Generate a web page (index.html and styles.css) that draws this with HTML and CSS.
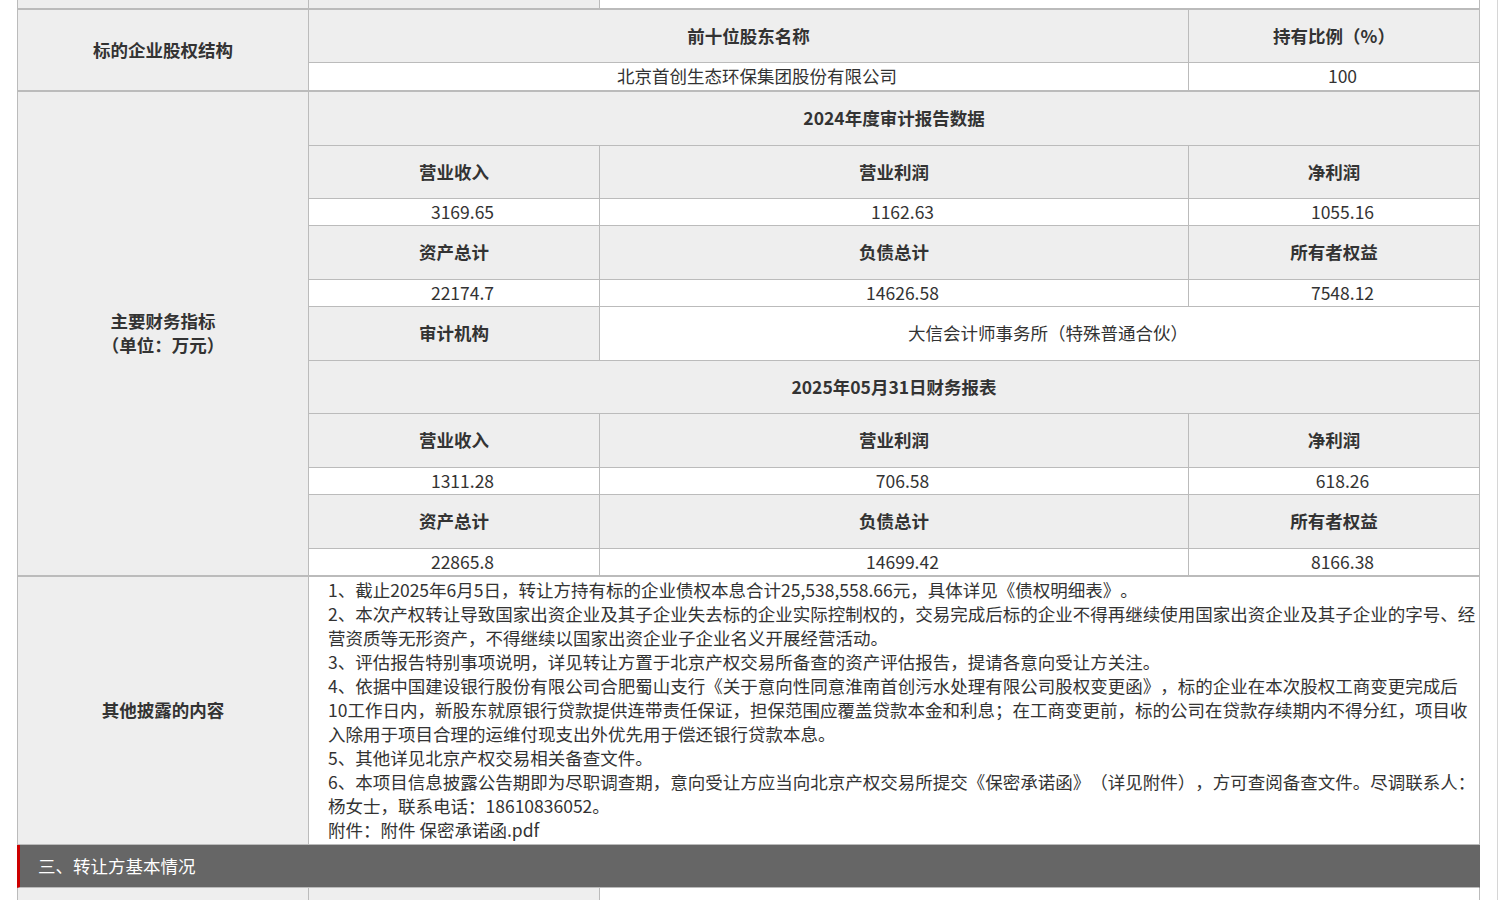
FILE: index.html
```html
<!DOCTYPE html>
<html lang="zh-CN">
<head>
<meta charset="utf-8">
<title>项目信息</title>
<link rel="stylesheet" href="styles.css">
</head>
<body>
<div class="page">
  <div class="sheet">
    <!-- previous row (partially visible) -->
    <div class="cell gray bb2"></div>
    <div class="cell gray bb2"></div>
    <div class="cell white bb2 cs2"></div>

    <!-- shareholders -->
    <div class="cell gray th rs2 bb2">标的企业股权结构</div>
    <div class="cell gray th cs2">前十位股东名称</div>
    <div class="cell gray th">持有比例（%）</div>
    <div class="cell white val cs2 bb2">北京首创生态环保集团股份有限公司</div>
    <div class="cell white val bb2">100</div>

    <!-- finance -->
    <div class="cell gray th rs11 bb2"><span class="stack">主要财务指标<br>（单位：万元）</span></div>
    <div class="cell gray th cs3">2024年度审计报告数据</div>

    <div class="cell gray th">营业收入</div>
    <div class="cell gray th">营业利润</div>
    <div class="cell gray th">净利润</div>
    <div class="cell white val">3169.65</div>
    <div class="cell white val">1162.63</div>
    <div class="cell white val">1055.16</div>

    <div class="cell gray th">资产总计</div>
    <div class="cell gray th">负债总计</div>
    <div class="cell gray th">所有者权益</div>
    <div class="cell white val">22174.7</div>
    <div class="cell white val">14626.58</div>
    <div class="cell white val">7548.12</div>

    <div class="cell gray th">审计机构</div>
    <div class="cell white val cs2">大信会计师事务所（特殊普通合伙）</div>

    <div class="cell gray th cs3">2025年05月31日财务报表</div>

    <div class="cell gray th">营业收入</div>
    <div class="cell gray th">营业利润</div>
    <div class="cell gray th">净利润</div>
    <div class="cell white val">1311.28</div>
    <div class="cell white val">706.58</div>
    <div class="cell white val">618.26</div>

    <div class="cell gray th">资产总计</div>
    <div class="cell gray th">负债总计</div>
    <div class="cell gray th">所有者权益</div>
    <div class="cell white val bb2">22865.8</div>
    <div class="cell white val bb2">14699.42</div>
    <div class="cell white val bb2">8166.38</div>

    <!-- other disclosures -->
    <div class="cell gray th">其他披露的内容</div>
    <div class="cell white notes cs3">1、截止2025年6月5日，转让方持有标的企业债权本息合计25,538,558.66元，具体详见《债权明细表》。<br>2、本次产权转让导致国家出资企业及其子企业失去标的企业实际控制权的，交易完成后标的企业不得再继续使用国家出资企业及其子企业的字号、经<br>营资质等无形资产，不得继续以国家出资企业子企业名义开展经营活动。<br>3、评估报告特别事项说明，详见转让方置于北京产权交易所备查的资产评估报告，提请各意向受让方关注。<br>4、依据中国建设银行股份有限公司合肥蜀山支行《关于意向性同意淮南首创污水处理有限公司股权变更函》，标的企业在本次股权工商变更完成后<br>10工作日内，新股东就原银行贷款提供连带责任保证，担保范围应覆盖贷款本金和利息；在工商变更前，标的公司在贷款存续期内不得分红，项目收<br>入除用于项目合理的运维付现支出外优先用于偿还银行贷款本息。<br>5、其他详见北京产权交易相关备查文件。<br>6、本项目信息披露公告期即为尽职调查期，意向受让方应当向北京产权交易所提交《保密承诺函》（详见附件），方可查阅备查文件。尽调联系人：<br>杨女士，联系电话：18610836052。<br>附件：<a class="file" href="#">附件 保密承诺函.pdf</a></div>

    <!-- section bar -->
    <div class="bar">三、转让方基本情况</div>

    <!-- next row (partially visible) -->
    <div class="cell gray"></div>
    <div class="cell gray"></div>
    <div class="cell white cs2"></div>
  </div>
</div>
</body>
</html>
```

FILE: styles.css
```css
html, body {
  margin: 0;
  padding: 0;
  background: #fff;
}

body {
  font-family: "Noto Sans CJK SC", "Microsoft YaHei", sans-serif;
  font-size: 17.5px;
  color: #333;
  text-spacing-trim: space-all;
}

.page {
  width: 1497px;
  height: 900px;
  overflow: hidden;
  border-right: 1px solid #d6d6d6;
}

.sheet {
  margin-left: 17px;
  width: 1462px;
  border-left: 1px solid #bbb;
  display: grid;
  grid-template-columns: 291px 291px 589px 291px;
  grid-template-rows: 10px 53px 29px 54px 53px 27px 54px 27px 54px 53px 54px 27px 54px 28px 268px 43px 40px;
}

.cell {
  box-sizing: border-box;
  border-right: 1px solid #bbb;
  border-bottom: 1px solid #bbb;
  display: flex;
  align-items: center;
  justify-content: center;
  text-align: center;
  white-space: nowrap;
  min-width: 0;
  padding-bottom: 2px;
}

.gray { background: #eee; }
.white { background: #fff; }
.bb2 { border-bottom-width: 2px; }
.th { font-weight: 700; }
.val { padding-left: 17px; }

.cs2 { grid-column: span 2; }
.cs3 { grid-column: span 3; }
.rs2 { grid-row: span 2; }
.rs11 { grid-row: span 11; }

.stack {
  display: block;
  line-height: 24px;
}

.notes {
  display: block;
  text-align: left;
  line-height: 24px;
  padding: 1px 0 0 19px;
}

.file {
  color: #333;
  text-decoration: none;
}

.bar {
  grid-column: 1 / -1;
  margin-left: -1px;
  box-sizing: border-box;
  background: #666;
  border-left: 3px solid #c00;
  border-right: 1px solid #666;
  border-bottom: 1px solid #bbb;
  color: #fff;
  display: flex;
  align-items: center;
  padding-left: 18px;
  padding-bottom: 2px;
}
```
